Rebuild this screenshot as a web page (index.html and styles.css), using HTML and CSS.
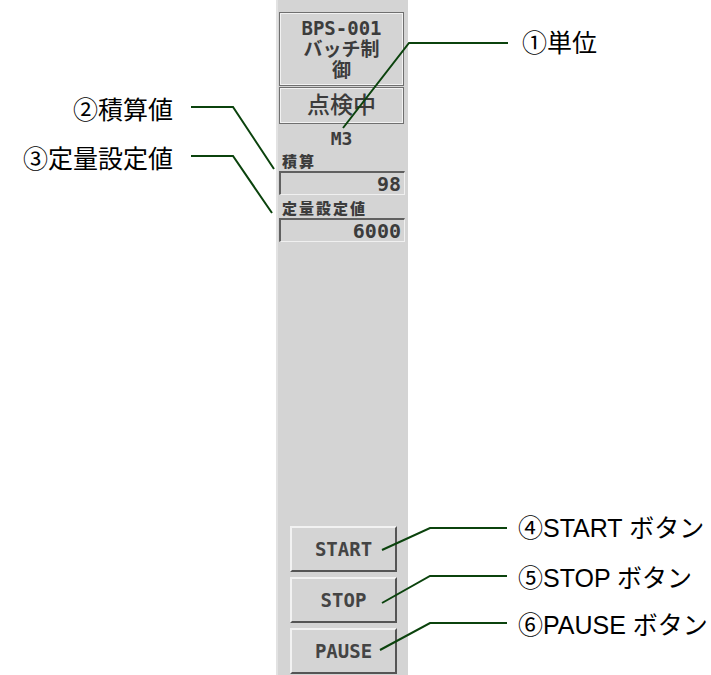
FILE: index.html
```html
<!DOCTYPE html><html><head><meta charset="utf-8"><meta name="viewport" content="width=device-width">
<title>BPS-001 バッチ制御</title>
<link rel="stylesheet" href="styles.css">
</head>
<body>
<div class="sheet">

<div class="panel">
	<div class="title">BPS-001<br>バッチ制<br>御</div>
	<div class="state">点検中</div>
	<div class="unit">M3</div>
	<div class="caption">積算</div>
	<div class="field">98</div>
	<div class="caption">定量設定値</div>
	<div class="field">6000</div>
	<div class="buttons">
		<div class="btn">START</div>
		<div class="btn">STOP</div>
		<div class="btn">PAUSE</div>
	</div>
</div>

<!-- leader lines -->
<svg class="leaders" width="711" height="675" viewBox="0 0 711 675">
	<g fill="none" stroke="#0b430d" stroke-width="2">
		<polyline points="343,128 409,43 508,43"/>
		<polyline points="191,107 233,107 274,169"/>
		<polyline points="191,156 233,156 272,213"/>
		<polyline points="382,550 430,528 507,528"/>
		<polyline points="382,603 430,576 507,576"/>
		<polyline points="380,650 430,623 507,623"/>
	</g>
</svg>

<div class="note r top" style="top:30px">①単位</div>
<div class="note l" style="top:97px">②積算値</div>
<div class="note l" style="top:146px">③定量設定値</div>
<div class="note r" style="top:515px">④START ボタン</div>
<div class="note r" style="top:565px">⑤STOP ボタン</div>
<div class="note r" style="top:612px">⑥PAUSE ボタン</div>

</div>
</body>
</html>
```

FILE: styles.css
```css
body {
	margin: 0;
	background: #fff;
	font-family: "Liberation Sans", "Noto Sans CJK JP", sans-serif;
}
.sheet {
	position: relative;
	width: 711px;
	height: 675px;
	overflow: hidden;
}
.panel {
	margin-left: 276px;
	width: 132px;
	height: 675px;
	box-sizing: border-box;
	padding: 12px 0 1px 3px;
	background: #d4d4d4;
	border-left: 2px solid #e2e2e2;
	display: flex;
	flex-direction: column;
	font-family: "DejaVu Sans Mono", "Noto Sans CJK JP", monospace;
	font-weight: bold;
	color: #3c3c3c;
}
.panel > div {
	margin-left: -2px;
}
.title, .state {
	width: 125px;
	box-sizing: border-box;
	border: 1px solid #6f6f6f;
	box-shadow: inset 1px 1px 0 #f2f2f2, inset -1px -1px 0 #f2f2f2;
	text-align: center;
}
.title {
	height: 74px;
	padding-top: 5px;
	font-size: 19px;
	line-height: 21px;
	font-weight: 600;
}
.state {
	height: 37px;
	margin-top: 1px;
	font-size: 23px;
	line-height: 35px;
	font-weight: 500;
}
.unit {
	width: 125px;
	margin-top: 6px;
	text-align: center;
	font-size: 18px;
	line-height: 18px;
}
.caption {
	margin-top: 6px;
	padding-left: 3px;
	font-size: 15px;
	line-height: 13px;
	letter-spacing: 2px;
	font-family: "Noto Sans CJK JP", sans-serif;
	font-weight: 900;
}
.field {
	width: 126px;
	height: 24px;
	margin-top: 4px;
	box-sizing: border-box;
	border-top: 2px solid #606060;
	border-left: 2px solid #606060;
	border-bottom: 1px solid #f0f0f0;
	border-right: 1px solid #f0f0f0;
	padding-right: 3px;
	text-align: right;
	font-size: 20px;
	line-height: 22px;
}
.buttons {
	margin-top: auto;
	display: flex;
	flex-direction: column;
	gap: 5px;
	padding-left: 11px;
}
.btn {
	width: 107px;
	height: 46px;
	box-sizing: border-box;
	border-top: 2px solid #f2f2f2;
	border-left: 2px solid #f2f2f2;
	border-bottom: 2px solid #555;
	border-right: 2px solid #555;
	text-align: center;
	font-size: 19px;
	line-height: 42px;
	color: #444;
}
.leaders {
	position: absolute;
	left: 0;
	top: 0;
}
.note {
	position: absolute;
	font-size: 25px;
	line-height: 26px;
	color: #000;
	white-space: nowrap;
}
.note.r {
	left: 518px;
}
.note.top {
	left: 522px;
}
.note.l {
	right: 538px;
}
```
